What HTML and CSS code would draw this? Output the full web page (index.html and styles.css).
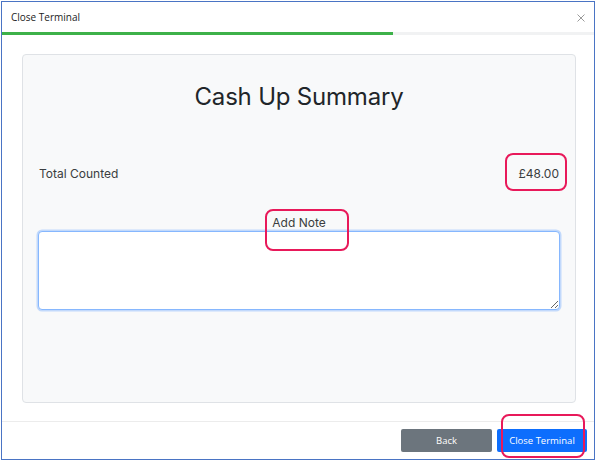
FILE: index.html
```html
<!DOCTYPE html>
<html lang="en">
  <head>
    <meta charset="UTF-8" />
    <meta name="viewport" content="width=device-width, initial-scale=1.0" />
    <title>Close Terminal</title>
    <link rel="stylesheet" href="styles.css">
  </head>
  <body>
    <div class="modal">
      <div class="modal-header">
        <span class="modal-title">Close Terminal</span>
        <button class="close" aria-label="Close">
          <svg width="8" height="8" viewBox="0 0 8 8">
            <path d="M0.5 0.5 L7.5 7.5 M7.5 0.5 L0.5 7.5" stroke="#9a9a9a" stroke-width="1" fill="none" />
          </svg>
        </button>
      </div>
      <div class="progress"><div class="progress-bar"></div></div>

      <div class="modal-body">
        <div class="card">
          <h2>Cash Up Summary</h2>
          <div class="total-row">
            <span>Total Counted</span>
            <span>£48.00</span>
          </div>
          <label for="note" class="note-label">Add Note</label>
          <textarea id="note" class="note" autofocus></textarea>
        </div>
      </div>

      <div class="modal-footer">
        <button class="btn btn-back">Back</button>
        <button class="btn btn-close">Close Terminal</button>
      </div>
    </div>

    <!-- highlight marks -->
    <div class="mark mark-total"></div>
    <div class="mark mark-note"></div>
    <div class="mark mark-btn"></div>
  </body>
</html>
```

FILE: styles.css
```css
body {
  margin: 0;
  padding: 1px;
  background: #fff;
  font-family: Inter, "Noto Sans", sans-serif;
  position: relative;
}

.modal {
  width: 594px;
  height: 459px;
  box-sizing: border-box;
  border: 1px solid #4a74c4;
  display: flex;
  flex-direction: column;
}

.modal-header {
  height: 30px;
  display: flex;
  align-items: center;
  justify-content: space-between;
  padding: 0 9px 0 9px;
}

.modal-title {
  font-family: "Open Sans", sans-serif;
  font-size: 10px;
  color: #222;
  margin-top: -1px;
}

.close {
  border: none;
  background: none;
  padding: 0;
  margin-top: 1px;
  display: flex;
}

.progress {
  height: 3px;
  background: #f1f2f3;
}

.progress-bar {
  width: 66%;
  height: 100%;
  background: #3db149;
}

.modal-body {
  padding: 19px 18px 0 20px;
}

.card {
  height: 349px;
  box-sizing: border-box;
  background: #f8f9fa;
  border: 1px solid #dfe2e6;
  border-radius: 4px;
  padding: 27px 16px 0 16px;
  display: flex;
  flex-direction: column;
}

h2 {
  margin: 0;
  font-size: 24px;
  line-height: 29px;
  font-weight: 400;
  letter-spacing: -0.2px;
  color: #212529;
  text-align: center;
}

.total-row {
  margin-top: 54px;
  display: flex;
  justify-content: space-between;
  font-size: 12px;
  line-height: 18px;
  color: #3a3d40;
}

.note-label {
  margin-top: 32px;
  font-size: 12px;
  line-height: 16px;
  color: #3a3d40;
  text-align: center;
}

.note {
  margin: 0 -1px;
  height: 79px;
  box-sizing: border-box;
  border: 1px solid #86b7fe;
  border-radius: 4px;
  box-shadow: 0 0 0 1.5px #c2d9fb;
  background: #fff;
  outline: none;
  resize: vertical;
  padding: 4px 6px;
  font-family: Inter, sans-serif;
  font-size: 12px;
  caret-color: #333;
}

.modal-footer {
  margin-top: 18px;
  border-top: 1px solid #ececec;
  flex: 1;
  display: flex;
  justify-content: flex-end;
  align-items: flex-start;
  gap: 5px;
  padding: 7px 7px 0 0;
}

.btn {
  width: 91px;
  height: 23px;
  border: none;
  border-radius: 2px;
  color: #fff;
  font-family: "Open Sans", sans-serif;
  font-size: 9.5px;
}

.btn-back {
  background: #6c757d;
}

.btn-close {
  width: 90px;
  background: #0d6efd;
}

.mark {
  position: absolute;
  border: 2px solid #e8195a;
  border-radius: 8px;
  box-sizing: border-box;
}

.mark-total {
  left: 505px;
  top: 153px;
  width: 62px;
  height: 38px;
}

.mark-note {
  left: 265px;
  top: 209px;
  width: 84px;
  height: 42px;
}

.mark-btn {
  left: 501px;
  top: 414px;
  width: 84px;
  height: 44px;
}
```
